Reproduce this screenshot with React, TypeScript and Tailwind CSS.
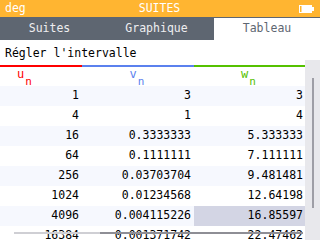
import React from 'react';

const rows = [
  ['1', '3', '3'],
  ['4', '1', '4'],
  ['16', '0.3333333', '5.333333'],
  ['64', '0.1111111', '7.111111'],
  ['256', '0.03703704', '9.481481'],
  ['1024', '0.01234568', '12.64198'],
  ['4096', '0.004115226', '16.85597'],
  ['16384', '0.001371742', '22.47462'],
];

function Battery() {
  return (
    <svg width="15" height="8" viewBox="0 0 15 8" className="block">
      <rect x="0.5" y="0.5" width="12" height="7" fill="none" stroke="white" />
      <rect x="2.5" y="1" width="9.5" height="6" fill="white" />
      <rect x="13" y="2" width="2" height="4" fill="white" />
    </svg>
  );
}

function Head({ letter, color }: { letter: string; color: string }) {
  return (
    <div className={`flex items-start ${color}`}>
      <span className="text-[12px] leading-[12px] mt-[1px]">{letter}</span>
      <span className="text-[11px] leading-[11px] mt-[9px] ml-[1px]">n</span>
    </div>
  );
}

export default function App() {
  return (
    <div className="w-[320px] h-[240px] overflow-hidden bg-white relative font-['DejaVu_Sans_Mono',monospace] text-[11.5px]">
      <div className="h-[17px] bg-[#FFB531] text-white flex items-center px-[5px]">
        <div className="flex-1">deg</div>
        <div>SUITES</div>
        <div className="flex-1 flex justify-end pr-[1px]">
          <Battery />
        </div>
      </div>

      <div className="h-[23px] bg-[#5E6671] flex">
        <div className="w-[99px] flex items-center justify-center text-[#EEEEF0]">Suites</div>
        <div className="w-[115px] flex items-center justify-center text-[#EEEEF0]">Graphique</div>
        <div className="w-[106px] mt-[1px] bg-white flex items-center justify-center text-[#5E6671]">Tableau</div>
      </div>

      <div className="h-[22px] flex items-center pl-[5px] pt-[5px] text-black">Régler l'intervalle</div>

      <div className="flex">
        <div className="w-[305px]">
          <div className="h-[3px]" />
          <div className="flex h-[2px]">
            <div className="w-[82px] bg-[#FF0000]" />
            <div className="w-[112px] bg-[#5B81EE]" />
            <div className="w-[111px] bg-[#55C100]" />
          </div>
          <div className="flex h-[19px]">
            <div className="w-[82px] pl-[17px]">
              <Head letter="u" color="text-[#FF0000]" />
            </div>
            <div className="w-[112px] flex justify-center pr-[2px]">
              <Head letter="v" color="text-[#5B81EE]" />
            </div>
            <div className="w-[111px] flex justify-center pr-[2px]">
              <Head letter="w" color="text-[#55C100]" />
            </div>
          </div>
          {rows.map((r, i) => (
            <div key={i} className={`flex h-[20px] text-black ${i % 2 === 0 ? 'bg-[#F6F8FE]' : 'bg-white'}`}>
              <div className="w-[82px] flex items-center justify-end pr-[3px]">{r[0]}</div>
              <div className="w-[112px] flex items-center justify-end pr-[3px]">{r[1]}</div>
              <div className={`w-[111px] flex items-center justify-end pr-[2px] ${i === 6 ? 'bg-[#D3D5E4]' : ''}`}>{r[2]}</div>
            </div>
          ))}
        </div>
        <div className="w-[15px] h-[180px] -mt-[2px] bg-[#E8E8EC] pl-[7px] pt-[18px]">
          <div className="w-[2px] h-[130px] bg-[#9E9EA6]" />
        </div>
      </div>

      <div className="absolute left-[14px] top-[232px] w-[289px] h-[2px] bg-[#CFCFD4]">
        <div className="ml-[86px] h-[2px] bg-[#8E8E95]" />
      </div>
    </div>
  );
}
